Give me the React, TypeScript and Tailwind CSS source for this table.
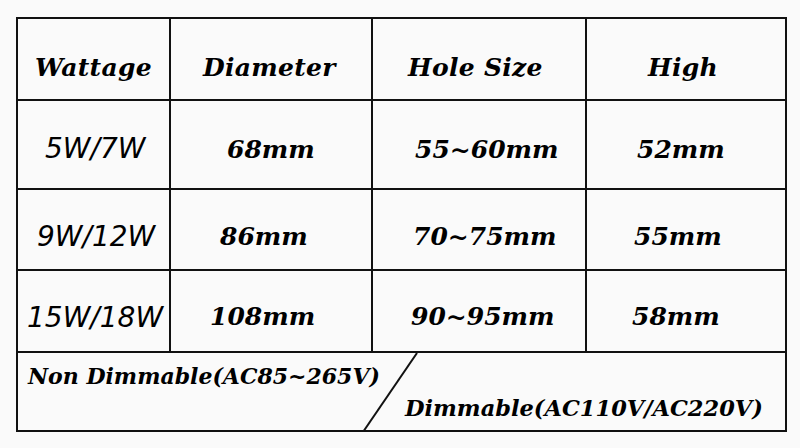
const serif = "font-['DejaVu_Serif','Liberation_Serif',serif] font-bold italic text-black";
const sans = "font-['DejaVu_Sans','Liberation_Sans',sans-serif] italic text-black";

type Cell = { text: string; pad: string };

const header: Cell[] = [
  { text: "Wattage", pad: "pl-[17px] pt-[17px]" },
  { text: "Diameter", pad: "pl-[32px] pt-[17px]" },
  { text: "Hole Size", pad: "pl-[35px] pt-[17px]" },
  { text: "High", pad: "pl-[61px] pt-[17px]" },
];

const rows: { watt: string; wpad: string; h: string; cells: [string, string][] }[] = [
  {
    watt: "5W/7W",
    wpad: "pl-[27px] pt-[8px]",
    h: "h-[89px]",
    cells: [["68mm", "pl-[56px] pt-[11px]"], ["55~60mm", "pl-[42px] pt-[11px]"], ["52mm", "pl-[50px] pt-[11px]"]],
  },
  {
    watt: "9W/12W",
    wpad: "pl-[19px] pt-[15px]",
    h: "h-[81px]",
    cells: [["86mm", "pl-[49px] pt-[15px]"], ["70~75mm", "pl-[40px] pt-[15px]"], ["55mm", "pl-[47px] pt-[15px]"]],
  },
  {
    watt: "15W/18W",
    wpad: "pl-[9px] pt-[13px]",
    h: "h-[82px]",
    cells: [["108mm", "pl-[39px] pt-[11px]"], ["90~95mm", "pl-[38px] pt-[11px]"], ["58mm", "pl-[45px] pt-[11px]"]],
  },
];

export default function App() {
  return (
    <div className="w-[800px] h-[448px] bg-[#fafafa] overflow-hidden pt-[17px] pl-[16px]">
      <div className="w-[771px] h-[415px] border-2 border-[#111] flex flex-col">
        <div className="grid grid-cols-[153px_202px_214px_1fr] h-[82px] shrink-0 border-b-2 border-[#111]">
          {header.map((h, i) => (
            <div
              key={h.text}
              className={`flex items-center ${h.pad} ${i < 3 ? "border-r-2 border-[#111]" : ""}`}
            >
              <span className={`${serif} text-[25px] tracking-[0.3px]`}>{h.text}</span>
            </div>
          ))}
        </div>
        {rows.map((r) => (
          <div
            key={r.watt}
            className={`grid grid-cols-[153px_202px_214px_1fr] shrink-0 border-b-2 border-[#111] ${r.h}`}
          >
            <div className={`flex items-center border-r-2 border-[#111] ${r.wpad}`}>
              <span className={`${sans} text-[28px]`}>{r.watt}</span>
            </div>
            {r.cells.map(([t, pad], ci) => (
              <div
                key={t}
                className={`flex items-center ${pad} ${ci < 2 ? "border-r-2 border-[#111]" : ""}`}
              >
                <span className={`${serif} text-[25px]`}>{t}</span>
              </div>
            ))}
          </div>
        ))}
        <div className="relative flex-1">
          <svg className="absolute inset-0" width="767" height="79" viewBox="0 0 767 79">
            <line x1="399" y1="0" x2="345" y2="79" stroke="#111" strokeWidth="2" />
          </svg>
          <div className="flex flex-col h-full pl-[10px] pt-[7px]">
            <span className={`${serif} text-[22px]`}>Non Dimmable(AC85~265V)</span>
            <span className={`${serif} text-[22.5px] self-start ml-[377px] -mt-px`}>
              Dimmable(AC110V/AC220V)
            </span>
          </div>
        </div>
      </div>
    </div>
  );
}
